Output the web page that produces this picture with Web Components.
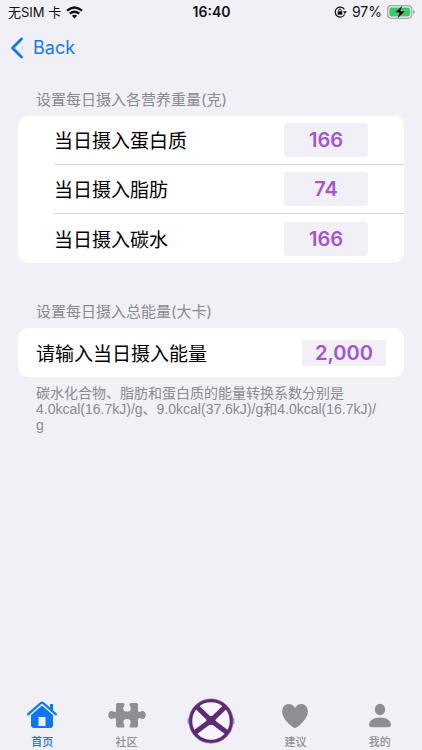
<!DOCTYPE html>
<html lang="zh-CN">
<head>
<meta charset="utf-8">
<meta name="viewport" content="width=device-width, initial-scale=1">
<title>每日摄入设置</title>
<style>
html { height: 100%; }
body {
  margin: 0; min-height: 100%; display: flex; flex-direction: column;
  background: #f1f0f6; color: #000;
  font-family: Inter, "Noto Sans CJK SC", sans-serif;
  --blue: #157ae9; --gray: #8a8a8f; --purple: #a653d0; --fill: #f1f0f6;
}
main { flex: 1; padding: 22px 18px; display: flex; flex-direction: column; gap: 39px; }
</style>
</head>
<body>
<status-bar></status-bar>
<nav-bar>Back</nav-bar>
<main>
  <settings-section heading="设置每日摄入各营养重量(克)">
    <settings-row class="nested" label="当日摄入蛋白质" value="166"></settings-row>
    <settings-row class="nested" label="当日摄入脂肪" value="74"></settings-row>
    <settings-row class="nested" label="当日摄入碳水" value="166"></settings-row>
  </settings-section>
  <settings-section heading="设置每日摄入总能量(大卡)">
    <settings-row label="请输入当日摄入能量" value="2,000"></settings-row>
    <span slot="note">碳水化合物、脂肪和蛋白质的能量转换系数分别是<br>4.0kcal(16.7kJ)/g、9.0kcal(37.6kJ)/g和4.0kcal(16.7kJ)/<br>g</span>
  </settings-section>
</main>
<tab-bar>
  <tab-item class="active" label="首页">
    <svg width="32" height="28" viewBox="0 0 32 28" fill="currentColor"><path d="M5 14 16 4.500 27 14V24q0 3-3 3H8q-3 0-3-3Z"/><path d="M1.500 13 14.500 1.700q1.500-1.200 3 0L30.500 13" fill="none" stroke="#f1f0f6" stroke-width="4.500"/><path d="M24 3h3v7l-3-2.500Z"/><path d="M2 13.300 14.800 2.200q1.200-1 2.400 0L30 13.300" fill="none" stroke="currentColor" stroke-width="2.200" stroke-linecap="round"/><rect x="12.500" y="16" width="7" height="9" fill="#f1f0f6"/></svg>
  </tab-item>
  <tab-item label="社区">
    <svg width="38" height="28" viewBox="0 0 38 28" fill="currentColor"><path d="M9.500 2h5.700q1.300 0 1.300 1.500c0 1.700-1.300 2.300-1.300 3.900 0 2.100 1.700 3.200 3.800 3.200s3.800-1.100 3.800-3.200c0-1.600-1.300-2.200-1.300-3.900Q21.500 2 22.800 2h5.700Q30 2 30 3.500v6q0 1.500 1.400 1.500c1 0 1.500-1 3-1 2.100 0 3.300 2 3.300 4s-1.200 4-3.300 4c-1.500 0-2-1-3-1Q30 17 30 18.500v6q0 2-1.700 2h-5.400q-1.400 0-1.400-1.500c0-1.600 1.200-2.200 1.200-3.800 0-2-1.600-3.200-3.700-3.200s-3.700 1.200-3.700 3.200c0 1.600 1.200 2.200 1.200 3.800q0 1.500-1.400 1.500H9.800Q8 26.500 8 24.500v-6Q8 17 6.600 17c-1 0-1.500 1-3 1C1.500 18 .3 16 .3 14s1.200-4 3.300-4c1.500 0 2 1 3 1Q8 11 8 9.500v-6Q8 2 9.500 2Z"/></svg>
  </tab-item>
  <tab-item aria="记录">
    <svg width="48" height="46" viewBox="0 0 48 46"><path d="M1.500 20v6M46.500 20v6" stroke="#a9a5b3" stroke-width="2"/><circle cx="24" cy="23" r="20.500" fill="#f7f4fb" stroke="#5d2b72" stroke-width="3.500"/><path d="M10.500 9.500 24 22.500 37.500 9.500M8 34.500 24 22.500 40 34.500" fill="none" stroke="#5d2b72" stroke-width="5"/><circle cx="24" cy="22.500" r="4.500" fill="#5d2b72"/><circle cx="24" cy="23" r="22.200" fill="none" stroke="#a184b0" stroke-width=".6"/></svg>
  </tab-item>
  <tab-item label="建议">
    <svg width="28" height="28" viewBox="0 0 28 28" fill="currentColor"><path d="M14 27C12.500 27 1.200 19 1.200 10.400 1.200 6 4 3 7.600 3c2.900 0 5 1.500 6.400 4C15.400 4.500 17.500 3 20.400 3c3.600 0 6.400 3 6.400 7.400C26.800 19 15.500 27 14 27Z"/></svg>
  </tab-item>
  <tab-item label="我的">
    <svg width="24" height="28" viewBox="0 0 24 28" fill="currentColor"><ellipse cx="12" cy="8.500" rx="5.200" ry="5.700"/><path d="M4 26.200q-3 0-3-2.700C1 20 5.500 16.500 12 16.500S23 20 23 23.500q0 2.700-3 2.700Z"/></svg>
  </tab-item>
</tab-bar>

<script>
class BaseElement extends HTMLElement {
  render(markup) {
    this.attachShadow({ mode: "open" }).innerHTML = markup;
  }
}

customElements.define("status-bar", class extends BaseElement {
  connectedCallback() {
    this.render(`
<style>
:host { display: grid; grid-template-columns: 1fr auto 1fr; align-items: center; height: 24px; padding: 0 7px 0 8px; font-size: 14px; line-height: 24px; color: #111; }
div { display: flex; align-items: center; gap: 5px; }
.end { justify-content: flex-end; }
b { font-weight: 600; }
svg { display: block; flex: none; }
.carrier { font-size: 13px; }
</style>
<div><span class="carrier">无SIM 卡</span>
<svg width="17" height="13" viewBox="0 0 17 13"><g fill="none" stroke="#111" stroke-width="2.400"><path d="M1 4.700q7.500-6.500 15 0"/><path d="M3.700 7.700q4.800-4 9.600 0"/></g><path d="M5.900 9.700q2.600-2 5.200 0L8.500 12.400Z" fill="#111"/></svg></div>
<b>16:40</b>
<div class="end">
<svg width="13" height="12" viewBox="0 0 13 12"><path d="M10.400 3.300A5 5 0 1 0 10.600 8.500" fill="none" stroke="#111" stroke-width="1.200"/><path d="M8.900 5.200h4L10.900 8Z" fill="#111"/><rect x="3.700" y="5.300" width="4.600" height="3.500" rx=".5" fill="#111"/><path d="M4.700 5.500V4.300q0-1.300 1.300-1.300t1.300 1.300v1.200" fill="none" stroke="#111" stroke-width=".9"/></svg>
<span>97%</span>
<svg width="28" height="14" viewBox="0 0 28 14"><rect x=".7" y=".7" width="24" height="12.600" rx="3.500" fill="none" stroke="#a5a5aa" stroke-width="1.200"/><rect x="2.400" y="2.400" width="20.600" height="9.200" rx="2" fill="#37cb63"/><path d="M26 4.800q1.800.7 1.800 2.200T26 9.200Z" fill="#a5a5aa"/><path d="M15.500.3 7.500 7.800h4.700L10.300 13.800 18.500 6h-4.800Z" fill="#000" stroke="#f1f0f6" stroke-width=".4"/></svg>
</div>`);
  }
});

customElements.define("nav-bar", class extends BaseElement {
  connectedCallback() {
    this.render(`
<style>
:host { display: flex; align-items: center; height: 44px; padding: 4px 10px 0; box-sizing: border-box; }
button { display: flex; align-items: center; gap: 9px; border: 0; padding: 0; background: none; color: var(--blue); font: 18px/24px Inter, sans-serif; }
</style>
<button type="button"><svg width="14" height="22" viewBox="0 0 14 22" fill="none" stroke="currentColor" stroke-width="2.800" stroke-linecap="round" stroke-linejoin="round"><path d="M11.500 2 2.500 11l9 9"/></svg><slot></slot></button>`);
  }
});

customElements.define("settings-section", class extends BaseElement {
  connectedCallback() {
    this.render(`
<style>
:host { display: block; }
h2 { margin: 0; padding: 0 18px 6px; font-size: 15px; line-height: 20px; font-weight: 400; color: var(--gray); }
.card { background: #fff; border-radius: 10px; overflow: hidden; }
p { margin: 0; padding: 8px 18px 0; font-family: "Liberation Sans", "Noto Sans CJK SC", sans-serif; font-size: 14px; line-height: 16px; color: var(--gray); }
</style>
<h2>${this.getAttribute("heading")}</h2>
<div class="card"><slot></slot></div>
<p><slot name="note"></slot></p>`);
    if (!this.querySelector("[slot=note]")) this.shadowRoot.querySelector("p").remove();
  }
});

customElements.define("settings-row", class extends BaseElement {
  connectedCallback() {
    this.render(`
<style>
:host { display: block; padding-left: 18px; }
:host(.nested) { padding-left: 36px; }
.row { box-sizing: border-box; display: flex; align-items: center; justify-content: space-between; height: 49px; padding-right: 18px; }
:host(.nested) .row { padding-right: 36px; }
:host(.nested:not(:last-child)) .row { border-bottom: 1px solid #d8d8dc; }
label { font: 19px/28px "Noto Sans CJK SC", sans-serif; }
input { box-sizing: border-box; width: 84px; height: 26px; border: 0; padding: 0; margin: 0; border-radius: 0; background: var(--fill); color: var(--purple); text-align: center; font: 600 20px/26px Inter, sans-serif; outline: 0; }
:host(.nested) input { height: 34px; border-radius: 3px; }
</style>
<div class="row"><label for="amount">${this.getAttribute("label")}</label><input id="amount" type="text" inputmode="numeric" value="${this.getAttribute("value")}"></div>`);
  }
});

customElements.define("tab-bar", class extends BaseElement {
  connectedCallback() {
    this.setAttribute("role", "navigation");
    this.render(`
<style>
:host { display: grid; grid-template-columns: repeat(5, 1fr); height: 52px; }
</style><slot></slot>`);
  }
});

customElements.define("tab-item", class extends BaseElement {
  connectedCallback() {
    const label = this.getAttribute("label");
    this.render(`
<style>
:host { display: flex; justify-content: center; color: #8e8e93; }
:host(.active) { color: #0a78ee; }
button { display: flex; flex-direction: column; align-items: center; justify-content: flex-start; gap: 6px; width: 100%; height: 52px; padding: ${label ? "3px" : "0"} 0 0; border: 0; background: none; color: inherit; font: 500 11px/14px Inter, "Noto Sans CJK SC", sans-serif; }
</style>
<button type="button" ${label ? "" : `aria-label="${this.getAttribute("aria")}"`}><slot></slot>${label ? `<span>${label}</span>` : ""}</button>`);
  }
});
</script>
</body>
</html>
